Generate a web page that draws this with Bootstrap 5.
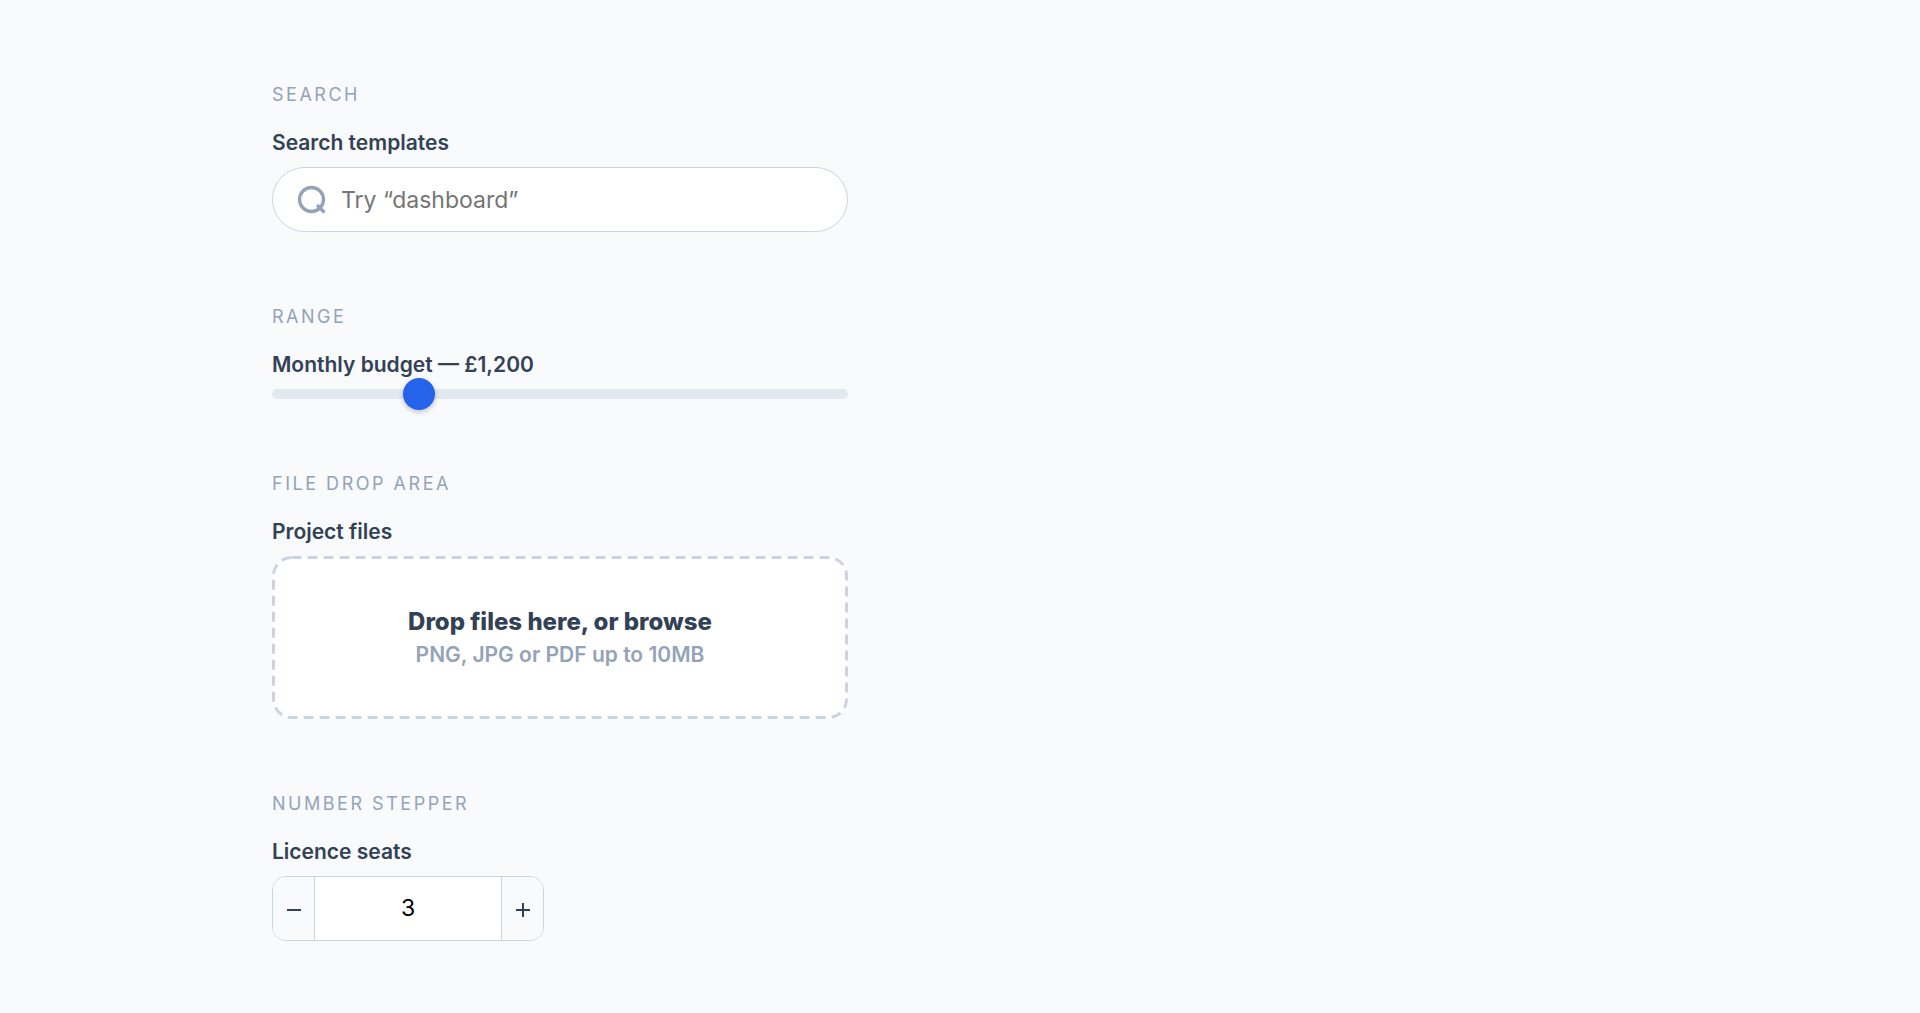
<!DOCTYPE html>
<html lang="en-GB">
<head>
<meta charset="utf-8">
<meta name="viewport" content="width=device-width, initial-scale=1">
<title>Form controls</title>
<link href="https://cdn.jsdelivr.net/npm/bootstrap@5.3.0/dist/css/bootstrap.min.css" rel="stylesheet">
<style>
  body { background: #f8fafc; color: #334155; font-family: Inter, "Liberation Sans", sans-serif; }
  .sheet { max-width: 1408px; padding: 81px 16px 70px; gap: 71px; }
  .field-group { max-width: 576px; }
  .eyebrow { font-size: 18px; line-height: 28px; font-weight: 400; letter-spacing: .14em; text-transform: uppercase; color: #94a3b8; margin-bottom: 18px; }
  .field-label { display: block; font-size: 21px; line-height: 32px; font-weight: 600; margin-bottom: 8px; }
  .search-box { height: 65px; padding: 0 24px; gap: 14px; background: #fff; border: 1px solid #cbd5e1; border-radius: 33px; }
  .search-box input { font-size: 23px; line-height: 32px; padding: 0; border: 0; background: none; box-shadow: none; }
  .search-box input:focus { background: none; box-shadow: none; }
  .search-box input::placeholder { color: #757575; opacity: 1; }
  .budget { display: block; appearance: none; -webkit-appearance: none; width: 100%; height: 10px; margin: 0; border-radius: 5px; background: #e2e8f0; }
  .budget::-webkit-slider-thumb { -webkit-appearance: none; width: 32px; height: 32px; border: 0; border-radius: 50%; background: #2563eb; box-shadow: 0 2px 5px rgba(15, 23, 42, .25); }
  .budget::-moz-range-thumb { width: 32px; height: 32px; border: 0; border-radius: 50%; background: #2563eb; box-shadow: 0 2px 5px rgba(15, 23, 42, .25); }
  .drop-zone { padding: 48px 32px; background: #fff; border-radius: 20px; cursor: pointer; }
  .drop-outline { position: absolute; inset: 0; width: 100%; height: 100%; pointer-events: none; }
  .drop-outline rect { x: 1.5px; y: 1.5px; width: calc(100% - 3px); height: calc(100% - 3px); rx: 18px; fill: none; stroke: #cbd5e1; stroke-width: 3px; stroke-dasharray: 10 6; }
  .drop-title { font-size: 24px; line-height: 35px; font-weight: 800; }
  .drop-hint { font-size: 21px; line-height: 32px; font-weight: 600; color: #94a3b8; }
  .stepper { width: 272px; height: 65px; border: 1px solid #cbd5e1; border-radius: 14px; overflow: hidden; }
  .stepper button { flex: 0 0 41px; padding: 0; border: 0; background: #f8fafc; color: #334155; }
  .stepper input { min-width: 0; padding: 0; border: solid #cbd5e1; border-width: 0 1px; background: #fff; color: #000; font-size: 23px; appearance: textfield; -moz-appearance: textfield; }
  .stepper input::-webkit-inner-spin-button { -webkit-appearance: none; margin: 0; }
</style>
</head>
<body>
<main class="sheet mx-auto d-flex flex-column">
  <section class="field-group">
    <h2 class="eyebrow">Search</h2>
    <label class="field-label" for="search">Search templates</label>
    <div class="search-box d-flex align-items-center">
      <svg class="flex-shrink-0" width="30" height="30" viewBox="0 0 30 30" fill="none" stroke="#94a3b8" stroke-width="3.3" aria-hidden="true"><circle cx="14.5" cy="14.5" r="12"/><path d="M20 20l7.5 7.5"/></svg>
      <input class="form-control" id="search" type="search" placeholder="Try “dashboard”">
    </div>
  </section>
  <section class="field-group">
    <h2 class="eyebrow">Range</h2>
    <label class="field-label" for="budget">Monthly budget — £1,200</label>
    <input class="budget" id="budget" type="range" min="0" max="5000" step="100" value="1200">
  </section>
  <section class="field-group">
    <h2 class="eyebrow">File drop area</h2>
    <label class="field-label" for="files">Project files</label>
    <label class="drop-zone d-block text-center position-relative" for="files">
      <svg class="drop-outline" aria-hidden="true"><rect/></svg>
      <span class="drop-title d-block">Drop files here, or browse</span>
      <span class="drop-hint d-block">PNG, JPG or PDF up to 10MB</span>
      <input class="visually-hidden" id="files" type="file" multiple>
    </label>
  </section>
  <section class="field-group">
    <h2 class="eyebrow">Number stepper</h2>
    <label class="field-label" for="seats">Licence seats</label>
    <div class="stepper d-flex">
      <button type="button" class="d-flex align-items-center justify-content-center" aria-label="Decrease seats"><svg width="16" height="16" viewBox="0 0 16 16" stroke="#334155" stroke-width="2" aria-hidden="true"><path d="M1 9h14"/></svg></button>
      <input class="flex-fill text-center" id="seats" type="number" value="3" min="1">
      <button type="button" class="d-flex align-items-center justify-content-center" aria-label="Increase seats"><svg width="16" height="16" viewBox="0 0 16 16" stroke="#334155" stroke-width="2" aria-hidden="true"><path d="M1 9h14M8 2v14"/></svg></button>
    </div>
  </section>
</main>
<script src="https://cdn.jsdelivr.net/npm/bootstrap@5.3.0/dist/js/bootstrap.bundle.min.js"></script>
</body>
</html>
